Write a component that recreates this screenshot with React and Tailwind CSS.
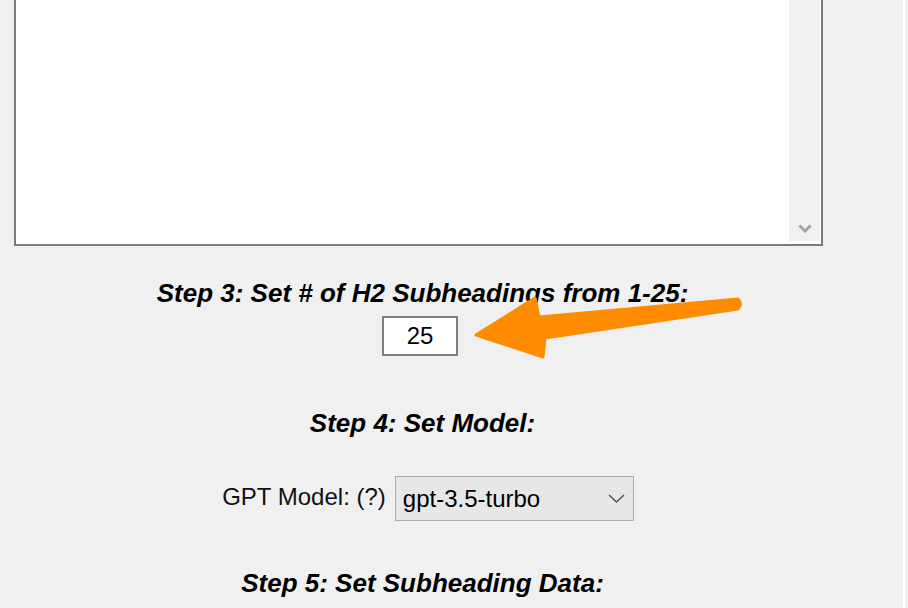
import React from 'react';

const font = { fontFamily: '"Liberation Sans", Arial, sans-serif' };

function ScrollTextarea() {
  return (
    <div className="ml-[14px] w-[809px] h-[246px] bg-white border-x-2 border-b-2 border-[#7c7c7c] flex">
      <div className="flex-1" />
      <div className="w-[31px] mr-[1px] mb-[3px] bg-[#f0f0f0] flex flex-col justify-end items-center pb-[8px]">
        <svg width="14" height="9" viewBox="0 0 14 9">
          <path d="M1.5 1.5 L7 7 L12.5 1.5" fill="none" stroke="#a3a3a3" strokeWidth="3" />
        </svg>
      </div>
    </div>
  );
}

function Heading({ children, className = '' }) {
  return (
    <h3 className={`text-center font-bold italic text-[26px] leading-[30px] text-black ${className}`}>
      {children}
    </h3>
  );
}

export default function App() {
  return (
    <div className="relative w-[908px] h-[608px] overflow-hidden bg-[#f0f0f0] flex" style={font}>
      <div className="w-[903px]">
        <ScrollTextarea />

        <div className="w-[845px]">
          <Heading className="mt-[32px]">Step 3: Set # of H2 Subheadings from 1-25:</Heading>
          <div className="flex justify-center mt-[8px] mr-[5px]">
            <div className="w-[76px] h-[40px] bg-white border-2 border-[#7f7f7f] flex items-center justify-center text-[24px] leading-none text-black">
              25
            </div>
          </div>

          <Heading className="mt-[52px]">Step 4: Set Model:</Heading>

          <div className="flex justify-center items-center mt-[38px] pl-[11px]">
            <span className="text-[24px] leading-none text-[#111] mb-[3px]">GPT Model: (?)</span>
            <div className="ml-[9px] w-[239px] h-[45px] bg-[#e7e7e7] border border-[#acacac] flex items-center justify-between pl-[7px] pr-[8px]">
              <span className="text-[24px] leading-none text-black">gpt-3.5-turbo</span>
              <svg width="17" height="9" viewBox="0 0 17 9">
                <path d="M1 1 L8.5 8 L16 1" fill="none" stroke="#505050" strokeWidth="1.4" />
              </svg>
            </div>
          </div>

          <Heading className="mt-[47px]">Step 5: Set Subheading Data:</Heading>
        </div>
      </div>
      <div className="w-[2px] bg-white" />
      <div className="flex-1 bg-[#f0f0f0]" />

      <svg className="absolute inset-0 pointer-events-none" width="908" height="608" viewBox="0 0 908 608">
        <path
          d="M476 335 L535 298 L539 317 L738 299 Q743 304 738 309 L545 338 L543 357 Z"
          fill="#ff8c00"
          stroke="#ff8c00"
          strokeWidth="3"
          strokeLinejoin="round"
        />
      </svg>
    </div>
  );
}
